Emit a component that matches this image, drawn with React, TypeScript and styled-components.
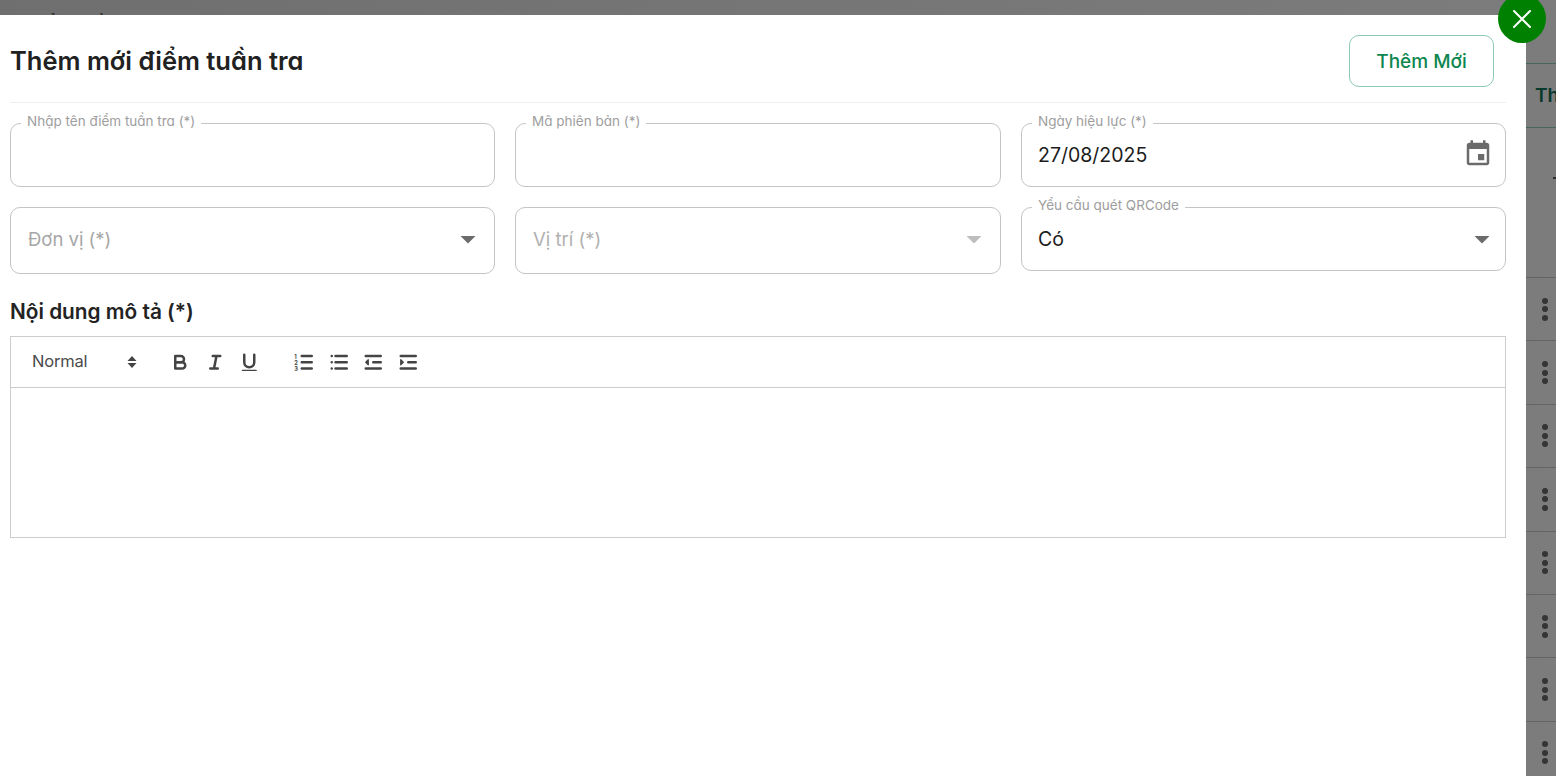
import React from "react";
import styled, { createGlobalStyle } from "styled-components";

const Global = createGlobalStyle`
  html, body { margin: 0; padding: 0; height: 100%; overflow: hidden; }
  body { font-family: Inter, "Noto Sans", "Liberation Sans", sans-serif; }
  * { box-sizing: border-box; }
`;

const Page = styled.div`
  position: relative;
  height: 776px;
  overflow: hidden;
  background: linear-gradient(90deg, #6f6f6f 0%, #7c7c7c 100%);
  display: flex;
  justify-content: space-between;
  align-items: flex-start;
`;
const BehindTitle = styled.div`
  margin: 12px 0 0 28px;
  font-size: 18px;
  font-weight: 600;
  line-height: 24px;
  color: #2e2e2e;
  white-space: nowrap;
`;
const BehindTable = styled.div`
  width: 30px;
  padding-top: 63px;
  overflow: hidden;
  flex: none;
`;
const BehindHead = styled.div`
  height: 65px;
  border-top: 1px solid #46675c;
  border-bottom: 1px solid #46675c;
  display: flex;
  align-items: center;
  padding-left: 9px;
  color: #06382b;
  font-size: 19px;
  font-weight: 600;
  white-space: nowrap;
`;
const BehindFirst = styled.div`
  height: 150px;
  border-bottom: 1px solid #646464;
  padding: 49px 0 0 27px;
`;
const Dash = styled.div`
  width: 6px;
  height: 2px;
  background: #2f2f2f;
`;
const BehindRow = styled.div`
  height: 63.4px;
  border-bottom: 1px solid #646464;
  display: flex;
  flex-direction: column;
  align-items: center;
  justify-content: center;
  gap: 2.5px;
  padding: 0 0 0 8px;
`;
const Dot = styled.i`
  display: block;
  width: 6px;
  height: 6px;
  border-radius: 50%;
  background: #353535;
`;

const Modal = styled.section`
  position: absolute;
  top: 15px;
  left: 0;
  bottom: 0;
  width: 1526px;
  background: #fff;
  padding: 0 20px 0 10px;
`;
const CloseButton = styled.button`
  position: absolute;
  top: -21px;
  left: 1498px;
  width: 48px;
  height: 49px;
  border-radius: 50%;
  border: 0;
  padding: 0;
  background: #008000;
  display: flex;
  align-items: center;
  justify-content: center;
`;
const Header = styled.header`
  height: 88px;
  border-bottom: 1px solid #eeeeee;
  display: flex;
  align-items: flex-start;
  justify-content: space-between;
  padding: 20px 12px 0 0;
`;
const Title = styled.h1`
  margin: 0;
  height: 52px;
  line-height: 52px;
  font-size: 25.5px;
  font-weight: 600;
  color: #212121;
  font-feature-settings: "cv11" 1;
`;
const AddButton = styled.button`
  width: 145px;
  height: 52px;
  background: #fff;
  border: 1px solid #8ec9b2;
  border-radius: 10px;
  font: 500 19px Inter, sans-serif;
  font-feature-settings: "cv11" 1;
  color: #0d8650;
  padding: 0;
`;
const Grid = styled.div`
  margin-top: 20px;
  display: grid;
  grid-template-columns: 485px 486px 485px;
  column-gap: 20px;
  row-gap: 20px;
  align-items: start;
`;
const Field = styled.div<{ $tall?: boolean; $snug?: boolean }>`
  position: relative;
  height: ${(p) => (p.$tall ? 67 : 64)}px;
  border: 1px solid #c4c4c4;
  border-radius: 10px;
  display: flex;
  align-items: center;
  justify-content: space-between;
  padding: 0 ${(p) => (p.$snug ? 8 : 11)}px ${(p) => (p.$tall ? 3 : 0)}px ${(p) => (p.$tall ? 17 : 16)}px;
`;
const Legend = styled.label`
  position: absolute;
  top: -12px;
  left: 10px;
  padding: 0 6px;
  background: #fff;
  font-size: 13.5px;
  line-height: 18px;
  color: #9e9e9e;
  white-space: nowrap;
  font-feature-settings: "cv11" 1;
`;
const Value = styled.span`
  font-size: 19.5px;
  color: #1c1c1c;
  font-feature-settings: "cv11" 1;
`;
const Placeholder = styled.span<{ $faint?: boolean }>`
  font-size: 18.5px;
  color: ${(p) => (p.$faint ? "#b0b0b0" : "#a6a6a6")};
  font-feature-settings: "cv11" 1;
`;
const Section = styled.h2`
  margin: 26px 0 0;
  height: 24px;
  line-height: 24px;
  font-size: 20.8px;
  font-weight: 600;
  color: #232323;
`;
const Editor = styled.div`
  margin-top: 12px;
  border: 1px solid #cccccc;
`;
const Toolbar = styled.div`
  height: 51px;
  border-bottom: 1px solid #cccccc;
  display: flex;
  align-items: center;
  padding-left: 21px;
`;
const Picker = styled.div`
  width: 105px;
  padding-bottom: 2px;
  display: flex;
  align-items: center;
  justify-content: space-between;
  font-size: 16.5px;
  color: #4a4a4a;
  margin-right: 32px;
  letter-spacing: -0.2px;
`;
const Tools = styled.div<{ $end?: boolean }>`
  display: flex;
  gap: 12.2px;
  margin-right: ${(p) => (p.$end ? 0 : 32)}px;
`;
const Tool = styled.button`
  width: 22.5px;
  height: 22.5px;
  padding: 0;
  border: 0;
  background: none;
  display: block;
`;
const Content = styled.div`
  height: 149px;
`;

const Caret = ({ color = "#6b6b6b" }: { color?: string }) => (
  <svg width="30" height="30" viewBox="0 0 30 30" style={{ display: "block" }}>
    <path d="M7.5 12h15L15 19.5z" fill={color} />
  </svg>
);

const CalendarIcon = () => (
  <svg width="30" height="30" viewBox="0 0 24 24" fill="#6b6b6b" style={{ display: "block", marginTop: -2, marginRight: 1 }}>
    <path d="M17 12h-5v5h5v-5zM16 1v2H8V1H6v2H5c-1.11 0-1.99.9-1.99 2L3 19c0 1.1.89 2 2 2h14c1.1 0 2-.9 2-2V5c0-1.1-.9-2-2-2h-1V1h-2zm3 18H5V8h14v11z" />
  </svg>
);

const Q = ({ children }: { children: React.ReactNode }) => (
  <Tool type="button">
    <svg
      width="22.5"
      height="22.5"
      viewBox="0 0 18 18"
      fill="none"
      stroke="#444"
      strokeWidth="2"
      strokeLinecap="round"
      strokeLinejoin="round"
      style={{ display: "block" }}
    >
      {children}
    </svg>
  </Tool>
);

const rows = [0, 1, 2, 3, 4, 5, 6, 7];

export default function App() {
  return (
    <Page>
      <Global />
      <BehindTitle>Điểm tuần tra</BehindTitle>
      <BehindTable>
        <BehindHead>Thao tác</BehindHead>
        <BehindFirst>
          <Dash />
        </BehindFirst>
        {rows.map((r) => (
          <BehindRow key={r}>
            <Dot />
            <Dot />
            <Dot />
          </BehindRow>
        ))}
      </BehindTable>
      <Modal>
        <CloseButton type="button" aria-label="Đóng">
          <svg width="24" height="24" viewBox="0 0 24 24" fill="none" stroke="#fff" strokeWidth="2" strokeLinecap="round">
            <path d="M4 4l16 16M20 4L4 20" />
          </svg>
        </CloseButton>
        <Header>
          <Title>Thêm mới điểm tuần tra</Title>
          <AddButton type="button">Thêm Mới</AddButton>
        </Header>
        <Grid>
          <Field>
            <Legend>Nhập tên điểm tuần tra (*)</Legend>
          </Field>
          <Field>
            <Legend>Mã phiên bản (*)</Legend>
          </Field>
          <Field>
            <Legend>Ngày hiệu lực (*)</Legend>
            <Value>27/08/2025</Value>
            <CalendarIcon />
          </Field>
          <Field $tall>
            <Placeholder>Đơn vị (*)</Placeholder>
            <Caret />
          </Field>
          <Field $tall>
            <Placeholder $faint>Vị trí (*)</Placeholder>
            <Caret color="#bdbdbd" />
          </Field>
          <Field $snug>
            <Legend>Yểu cầu quét QRCode</Legend>
            <Value>Có</Value>
            <Caret />
          </Field>
        </Grid>
        <Section>Nội dung mô tả (*)</Section>
        <Editor>
          <Toolbar>
            <Picker>
              Normal
              <svg width="10" height="14" viewBox="0 0 10 14" fill="#444" style={{ display: "block", marginTop: 2, marginRight: 0 }}>
                <path d="M5 1L9.5 6H.5zM5 13L.5 8h9z" />
              </svg>
            </Picker>
            <Tools>
              <Q>
                <path d="M5,4H9.5A2.5,2.5,0,0,1,12,6.5v0A2.5,2.5,0,0,1,9.5,9H5V4Z" />
                <path d="M5,9h5.5A2.5,2.5,0,0,1,13,11.5v0A2.5,2.5,0,0,1,10.5,14H5V9Z" />
              </Q>
              <Q>
                <path d="M7 4h6M5 14h6M8 14l2-10" />
              </Q>
              <Q>
                <path d="M5,3V9a4,4,0,0,0,4,4h0a4,4,0,0,0,4-4V3" />
                <path d="M3.5 15.5h11" strokeWidth="1" />
              </Q>
            </Tools>
            <Tools $end>
              <Q>
                <path d="M7 4h8M7 9h8M7 14h8" />
                <text x="1" y="6" fontSize="4.5" fontWeight="700" fill="#444" stroke="none" fontFamily="Inter, sans-serif">1</text>
                <text x="1" y="11" fontSize="4.5" fontWeight="700" fill="#444" stroke="none" fontFamily="Inter, sans-serif">2</text>
                <text x="1" y="16" fontSize="4.5" fontWeight="700" fill="#444" stroke="none" fontFamily="Inter, sans-serif">3</text>
              </Q>
              <Q>
                <path d="M6 4h9M6 9h9M6 14h9M3 4h0M3 9h0M3 14h0" />
              </Q>
              <Q>
                <path d="M3 14h12M3 4h12M9 9h6" />
                <path d="M5 7v4L3 9z" fill="#444" strokeWidth="1" />
              </Q>
              <Q>
                <path d="M3 14h12M3 4h12M9 9h6" />
                <path d="M3 7v4l2-2z" fill="#444" strokeWidth="1" />
              </Q>
            </Tools>
          </Toolbar>
          <Content />
        </Editor>
      </Modal>
    </Page>
  );
}
